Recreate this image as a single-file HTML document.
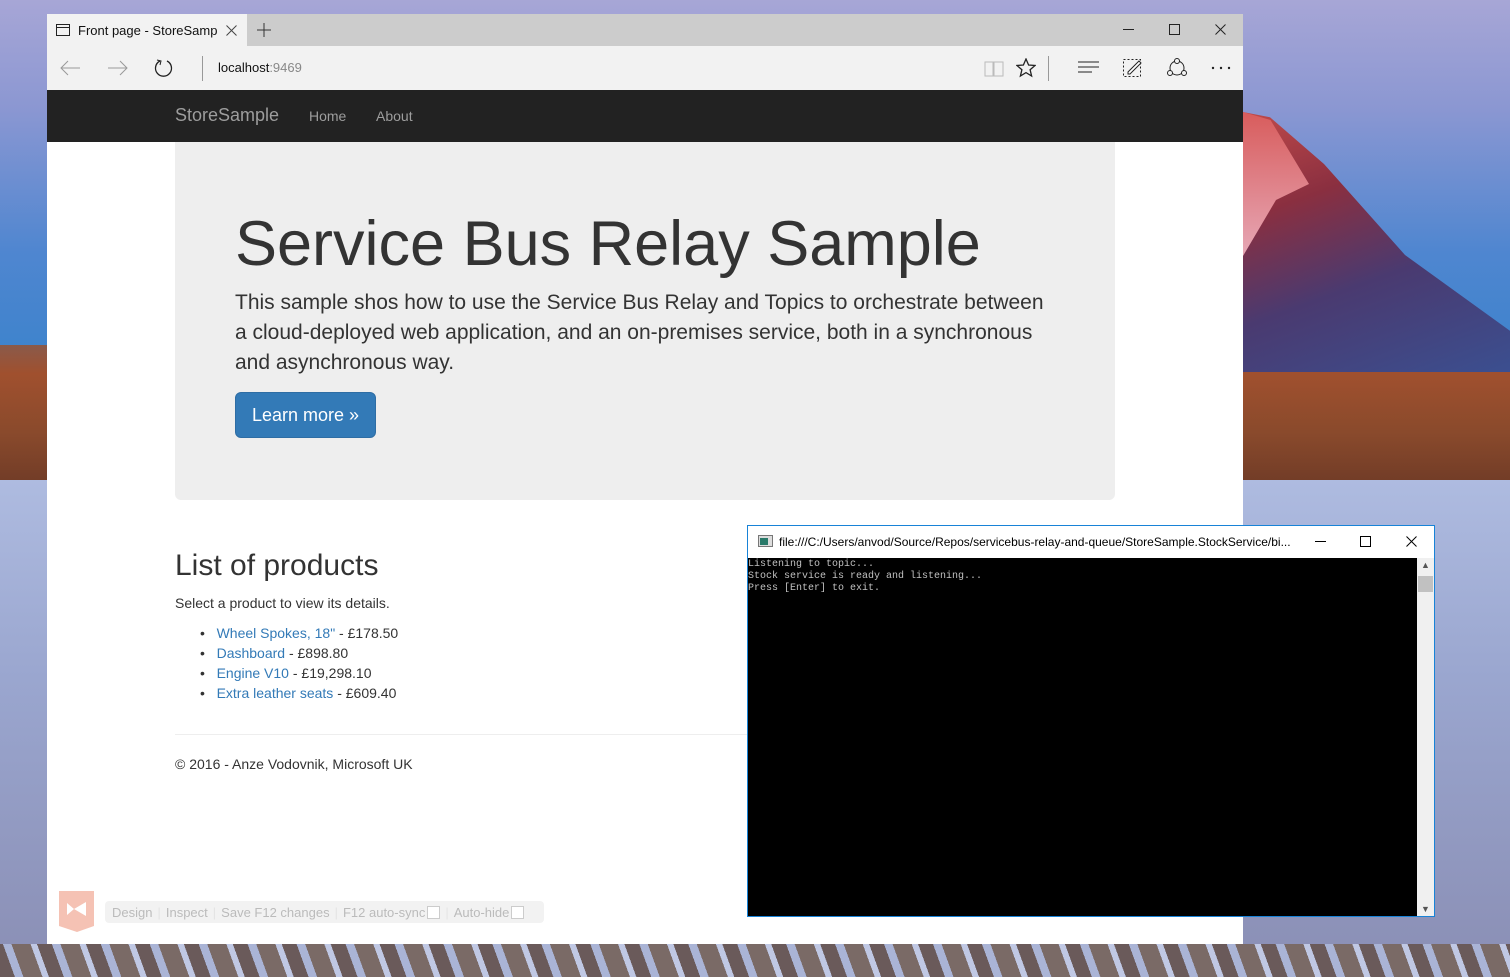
<!DOCTYPE html>
<html><head><style>
*{margin:0;padding:0;box-sizing:border-box}
body{width:1510px;height:977px;overflow:hidden;position:relative;font-family:"Liberation Sans",sans-serif;background:#5a6fae}
.a{position:absolute}
.sky{left:0;top:0;width:1510px;height:360px;background:linear-gradient(#a7a6d6 0%,#8b97d2 30%,#4f86d0 70%,#3d83cc 100%)}
.mtn{left:1243px;top:112px;width:270px;height:260px;background:linear-gradient(160deg,#c04a4a 0%,#8a2f40 30%,#4a3a70 60%,#3b4f90 100%);clip-path:polygon(0 0,10% 2%,30% 20%,60% 55%,100% 85%,100% 100%,0 100%)}
.snow{left:1243px;top:112px;width:110px;height:160px;background:linear-gradient(#d85c5c,#e8b0c0);clip-path:polygon(0 0,25% 5%,60% 45%,30% 55%,0 90%)}
.plain{left:0;top:345px;width:1510px;height:145px;background:linear-gradient(#8a5a4a,#a0502e 20%,#8a4a2c 60%,#6e3a26)}
.ice{left:0;top:480px;width:1510px;height:497px;background:linear-gradient(#aebbe0,#9aa6cf 40%,#8a8eb4 100%)}
.ice2{left:0;top:944px;width:1510px;height:33px;background:repeating-linear-gradient(70deg,#6a5a5a 0 14px,#aab4d6 14px 22px,#7a6a66 22px 40px,#c0c8e4 40px 46px)}
.br{left:47px;top:14px;width:1196px;height:930px;background:#fff}
.tabs{left:0;top:0;width:1196px;height:32px;background:#cccccc}
.tab{left:0;top:0;width:200px;height:32px;background:#f2f2f2;font-size:13px;color:#111;padding:9px 0 0 31px}
.addr{left:0;top:32px;width:1196px;height:44px;background:#f2f2f2}
.nav{left:0;top:76px;width:1196px;height:52px;background:#222}
.jumbo{left:128px;top:128px;width:940px;height:358px;background:#eee;border-radius:0 0 6px 6px}
h1{position:absolute;left:60px;top:66px;font-size:63px;font-weight:normal;color:#333;white-space:nowrap}
.lead{position:absolute;left:60px;top:146px;width:815px;font-size:21px;line-height:30px;color:#333}
.btn{position:absolute;left:60px;top:250px;width:141px;height:46px;background:#337ab7;border:1px solid #2e6da4;border-radius:6px;color:#fff;font-size:18px;text-align:center;line-height:44px}
a{color:#337ab7;text-decoration:none}
.con{left:747px;top:525px;width:688px;height:392px;background:#000;border:1px solid #1883d7}
.ct{left:0;top:0;width:686px;height:32px;background:#fff;font-size:12px;color:#000;padding:9px 0 0 31px;white-space:nowrap}
.cout{left:0;top:33px;font-family:"Liberation Mono",monospace;font-size:10px;line-height:12px;color:#c0c0c0;white-space:pre}
.sb{left:669px;top:32px;width:17px;height:358px;background:#f0f0f0}
.sep{color:#e4e4e4;margin:0 5px}
.cb{display:inline-block;width:13px;height:13px;border:1px solid #ccc;background:#fff;vertical-align:-2px;margin-left:2px}
</style></head><body>
<div class="a sky"></div><div class="a plain"></div><div class="a mtn"></div><div class="a snow"></div>
<div class="a ice"></div><div class="a ice2"></div>
<div class="a br">
 <div class="a tabs"></div>
 <div class="a tab">Front page - StoreSamp</div>
 <svg class="a" style="left:9px;top:10px" width="14" height="12"><rect x="0.5" y="0.5" width="13" height="11" fill="none" stroke="#222"/><line x1="0" y1="3.5" x2="14" y2="3.5" stroke="#222"/></svg>
 <svg class="a" style="left:179px;top:11px" width="11" height="11"><path d="M0.5 0.5l10 10M10.5 0.5l-10 10" stroke="#444"/></svg>
 <svg class="a" style="left:210px;top:9px" width="14" height="14"><path d="M7 0v14M0 7h14" stroke="#333"/></svg>
 <svg class="a" style="left:1076px;top:15px" width="11" height="2"><path d="M0 0.5h11" stroke="#222"/></svg>
 <svg class="a" style="left:1122px;top:10px" width="12" height="12"><rect x="0.5" y="0.5" width="10" height="10" fill="none" stroke="#222"/></svg>
 <svg class="a" style="left:1168px;top:10px" width="11" height="11"><path d="M0.5 0.5l10 10M10.5 0.5l-10 10" stroke="#222"/></svg>
 <div class="a addr">
  <svg class="a" style="left:12px;top:13px" width="22" height="18"><path d="M2 9h19M9 2L2 9l7 7" stroke="#999" fill="none"/></svg>
  <svg class="a" style="left:60px;top:13px" width="22" height="18"><path d="M1 9h19M13 2l7 7-7 7" stroke="#999" fill="none"/></svg>
  <svg class="a" style="left:107px;top:12px" width="20" height="20"><path d="M6 3A8 8 0 1 0 13 3" stroke="#222" stroke-width="1.3" fill="none"/><path d="M3 2l4 1-1 4" stroke="#222" fill="none"/></svg>
  <div class="a" style="left:155px;top:10px;width:1px;height:25px;background:#999"></div>
  <div class="a" style="left:171px;top:14px;font-size:13px;color:#111">localhost<span style="color:#888">:9469</span></div>
  <svg class="a" style="left:937px;top:14px" width="20" height="18"><path d="M1 2h8v14H1zM10 2h9v14h-9z" stroke="#bbb" fill="none"/></svg>
  <svg class="a" style="left:969px;top:12px" width="20" height="20"><path d="M10 1l2.6 6 6.4.5-4.9 4.2 1.5 6.3L10 14.6 4.4 18l1.5-6.3L1 7.5 7.4 7z" fill="none" stroke="#222" stroke-width="1.3"/></svg>
  <div class="a" style="left:1001px;top:10px;width:1px;height:25px;background:#999"></div>
  <svg class="a" style="left:1031px;top:15px" width="22" height="14"><path d="M0 1h21M0 6h21M0 11h14" stroke="#222"/></svg>
  <svg class="a" style="left:1075px;top:11px" width="22" height="22"><rect x="1.5" y="2.5" width="17" height="17" fill="none" stroke="#222" stroke-dasharray="2 2"/><path d="M6 15l11-11 2 2-11 11H6z" fill="#fff" stroke="#222"/></svg>
  <svg class="a" style="left:1119px;top:11px" width="22" height="22"><circle cx="11" cy="11" r="7" fill="none" stroke="#222"/><circle cx="11" cy="4" r="2.5" fill="#f2f2f2" stroke="#222"/><circle cx="4" cy="16" r="2.5" fill="#f2f2f2" stroke="#222"/><circle cx="18" cy="16" r="2.5" fill="#f2f2f2" stroke="#222"/></svg>
  <svg class="a" style="left:1164px;top:20px" width="20" height="4"><circle cx="2" cy="2" r="1.2" fill="#222"/><circle cx="10" cy="2" r="1.2" fill="#222"/><circle cx="18" cy="2" r="1.2" fill="#222"/></svg>
 </div>
 <div class="a nav">
  <div class="a" style="left:128px;top:15px;font-size:18px;color:#9d9d9d">StoreSample</div>
  <div class="a" style="left:262px;top:18px;font-size:14px;color:#9d9d9d">Home</div>
  <div class="a" style="left:329px;top:18px;font-size:14px;color:#9d9d9d">About</div>
 </div>
 <div class="a jumbo">
  <h1>Service Bus Relay Sample</h1>
  <div class="lead">This sample shos how to use the Service Bus Relay and Topics to orchestrate between a cloud-deployed web application, and an on-premises service, both in a synchronous and asynchronous way.</div>
  <div class="btn">Learn more »</div>
 </div>
 <div class="a" style="left:128px;top:535px;font-size:30px;color:#333">List of products</div>
 <div class="a" style="left:128px;top:581px;font-size:14px;color:#333">Select a product to view its details.</div>
 <div class="a" style="left:153px;top:609px;font-size:14px;line-height:20px;color:#333">
  <div>•&nbsp;&nbsp;&nbsp;<a>Wheel Spokes, 18"</a> - £178.50</div>
  <div>•&nbsp;&nbsp;&nbsp;<a>Dashboard</a> - £898.80</div>
  <div>•&nbsp;&nbsp;&nbsp;<a>Engine V10</a> - £19,298.10</div>
  <div>•&nbsp;&nbsp;&nbsp;<a>Extra leather seats</a> - £609.40</div>
 </div>
 <div class="a" style="left:128px;top:720px;width:940px;height:1px;background:#eee"></div>
 <div class="a" style="left:128px;top:742px;font-size:14px;color:#333">© 2016 - Anze Vodovnik, Microsoft UK</div>
 <svg class="a" style="left:12px;top:877px" width="36" height="41"><path d="M0 0h35v35l-17 6-18-6z" fill="#f5c2b4"/><path d="M8 12l7 6-7 6zM27 11l-12 7 12 7z" fill="#fff"/></svg>
 <div class="a" style="left:58px;top:887px;width:439px;height:22px;background:#f2f2f2;border-radius:4px;font-size:13px;color:#bbb;padding:4px 0 0 7px;white-space:nowrap">Design<span class="sep">|</span>Inspect<span class="sep">|</span>Save F12 changes<span class="sep">|</span>F12 auto-sync<span class="cb"></span><span class="sep">|</span>Auto-hide<span class="cb"></span></div>
</div>
<div class="a con">
 <div class="a ct">file:///C:/Users/anvod/Source/Repos/servicebus-relay-and-queue/StoreSample.StockService/bi...</div>
 <svg class="a" style="left:10px;top:9px" width="16" height="13"><rect x="0.5" y="0.5" width="14" height="11" fill="#ddd" stroke="#777"/><rect x="2" y="3" width="8" height="7" fill="#2a7a6a"/></svg>
 <svg class="a" style="left:567px;top:15px" width="11" height="2"><path d="M0 0.5h11" stroke="#000"/></svg>
 <svg class="a" style="left:612px;top:10px" width="12" height="12"><rect x="0.5" y="0.5" width="10" height="10" fill="none" stroke="#000"/></svg>
 <svg class="a" style="left:658px;top:10px" width="11" height="11"><path d="M0.5 0.5l10 10M10.5 0.5l-10 10" stroke="#000"/></svg>
 <div class="a cout">Listening to topic...
Stock service is ready and listening...
Press [Enter] to exit.</div>
 <div class="a sb"><div style="margin:18px 1px 0;height:16px;background:#c1c1c1"></div><div style="position:absolute;left:4px;top:2px;font-size:9px;color:#555">▲</div><div style="position:absolute;left:4px;bottom:2px;font-size:9px;color:#555">▼</div></div>
</div>
</body></html>
